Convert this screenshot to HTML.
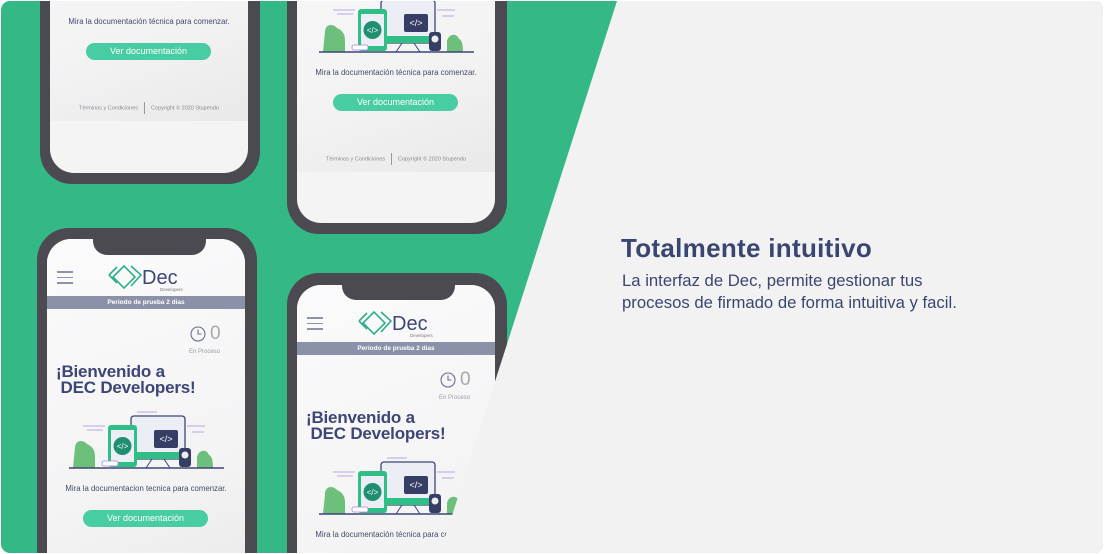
<!DOCTYPE html>
<html><head><meta charset="utf-8"><style>
*{margin:0;padding:0;box-sizing:border-box}
html,body{width:1104px;height:554px;overflow:hidden;background:#fff;font-family:"Liberation Sans",sans-serif}
#card{position:absolute;left:1px;top:1px;width:1102px;height:552px;border-radius:9px;overflow:hidden;background:#33b886}
.phone{position:absolute;width:220px;background:#4a4a50;border-radius:32px}
.screen{position:absolute;left:10px;width:198px;height:400px;overflow:hidden;border-radius:24px;background:#f4f4f4}
.inner{position:absolute;left:0;top:0;width:198px;height:349px;background:linear-gradient(160deg,#fbfbfc 0%,#f3f3f4 70%,#e9e9ea 100%)}
.notch{position:absolute;width:113px;height:27px;background:#4a4a50;border-radius:0 0 14px 14px;top:0}
.ham{position:absolute;left:10px;top:32px;width:16px}
.ham i{display:block;height:1.5px;background:#8d93a8;margin-bottom:4px}
.bar{position:absolute;left:0;top:57px;width:198px;height:13px;background:#8b91a8;color:#fff;font-size:6.5px;font-weight:bold;text-align:center;line-height:13px}
.zero{position:absolute;left:163px;top:84px;font-size:19px;color:#a8a8ad;font-weight:300}
.enp{position:absolute;left:142px;top:110px;font-size:6px;color:#9a9aa6}
.h{position:absolute;left:9px;top:125px;font-size:17px;line-height:16px;font-weight:bold;color:#3d4674;letter-spacing:-0.2px}
.mira{position:absolute;left:0;width:198px;top:245px;text-align:center;font-size:7.8px;color:#444a6e}
.btn{position:absolute;left:36px;top:271px;width:125px;height:17px;border-radius:9px;background:#48cca3;color:#fff;font-size:9px;text-align:center;line-height:17px}
.foot{position:absolute;left:0;width:198px;top:330px;text-align:center;font-size:5.5px;color:#8a8a90}
.foot b{display:inline-block;width:1px;height:12px;background:#999;vertical-align:middle;margin:0 6px;font-weight:normal}
#gray{position:absolute;left:0;top:0;width:1102px;height:552px;background:#f2f2f2;clip-path:polygon(616px 0,1102px 0,1102px 552px,439px 552px)}
h1{position:absolute;left:620px;top:232px;font-size:26px;color:#3b4670;font-weight:bold;letter-spacing:0.3px}
p{position:absolute;left:621px;top:269px;font-size:16.7px;line-height:22px;color:#3b4670}
</style></head><body><div id="card">

<div class="phone" style="left:39px;top:-260px;height:443px"><div class="screen" style="top:31px;height:401px">
<div class="inner"></div>
<div class="mira">Mira la documentación técnica para comenzar.</div>
<div class="btn">Ver documentación</div>
<div class="foot">Términos y Condiciones<b></b>Copyright © 2020 Stupendo</div>
</div></div>

<div class="phone" style="left:286px;top:-210px;height:443px"><div class="screen" style="top:32px">
<div class="inner"></div>
<svg style="position:absolute;left:0;top:160px" width="198" height="80" viewBox="0 0 198 80">
<path d="M28 49c0-8 8-9 12-4 5 2 8 6 8 12v12H26z" fill="#6cc07b"/><path d="M150 69v-11c2-8 10-8 12-2 3 1 4 6 4 13z" fill="#6cc07b"/>
<rect x="84" y="17" width="54" height="43" rx="3" fill="#eceef5" stroke="#3d4674" stroke-width="1.3"/>
<rect x="90" y="53" width="47" height="7" fill="#2fbf86"/>
<path d="M105 60l-6 9M117 60l6 9" stroke="#3d4674"/>
<rect x="61" y="26" width="29" height="42" rx="3" fill="#2fbf86"/><rect x="64" y="31" width="23" height="32" fill="#eceef5"/>
<circle cx="75.5" cy="47" r="9" fill="#1f8f6f"/><text x="75.5" y="50" font-size="8" fill="#fff" text-anchor="middle" font-family="Liberation Sans">&lt;/&gt;</text>
<rect x="107" y="31" width="24" height="18" rx="2" fill="#363e66"/><text x="119" y="43" font-size="9" fill="#fff" text-anchor="middle" font-family="Liberation Sans">&lt;/&gt;</text>
<rect x="132" y="49" width="12" height="19" rx="3" fill="#363e66"/><circle cx="138" cy="56" r="3.5" fill="#eee"/>
<rect x="55" y="62" width="16" height="5" rx="2" fill="#fff" stroke="#a889d6" stroke-width="0.8"/>
<path d="M36 27h22M40 31h16M140 27h18M145 33h12M90 13h20" stroke="#a889d6" stroke-width="0.8"/>
<path d="M22 69h155" stroke="#3d4674" stroke-width="1.5"/></svg>
<div class="mira">Mira la documentación técnica para comenzar.</div>
<div class="btn">Ver documentación</div>
<div class="foot">Términos y Condiciones<b></b>Copyright © 2020 Stupendo</div>
</div></div>

<div class="phone" style="left:36px;top:227px;height:440px"><div class="screen" style="top:11px">
<div class="inner"></div>
<div class="ham"><i></i><i></i><i></i></div>
<svg style="position:absolute;left:58px;top:22px" width="84" height="32" viewBox="0 0 84 32"><path d="M10 14l9-9 11 11-11 11-11-11z" fill="none" stroke="#2fae8a" stroke-width="1.6"/><path d="M4 14l8-8M4 14l8 8M26 5l10 9-10 11" fill="none" stroke="#2fae8a" stroke-width="1.6"/><text x="37" y="23" font-size="20" fill="#3d4674" font-family="Liberation Sans">Dec</text><text x="55" y="30" font-size="4.5" fill="#777" font-family="Liberation Sans">Developers</text></svg>
<div class="bar">Periodo de prueba 2 dias</div>
<svg style="position:absolute;left:143px;top:87px" width="16" height="16"><circle cx="8" cy="8" r="7" fill="none" stroke="#6b7091" stroke-width="1.1"/><path d="M8 3.5V8h3.5" fill="none" stroke="#6b7091" stroke-width="1.1"/></svg>
<div class="zero">0</div><div class="enp">En Proceso</div>
<div class="h">¡Bienvenido a<br>&nbsp;DEC Developers!</div>
<svg style="position:absolute;left:0;top:160px" width="198" height="80" viewBox="0 0 198 80">
<path d="M28 49c0-8 8-9 12-4 5 2 8 6 8 12v12H26z" fill="#6cc07b"/><path d="M150 69v-11c2-8 10-8 12-2 3 1 4 6 4 13z" fill="#6cc07b"/>
<rect x="84" y="17" width="54" height="43" rx="3" fill="#eceef5" stroke="#3d4674" stroke-width="1.3"/>
<rect x="90" y="53" width="47" height="7" fill="#2fbf86"/>
<path d="M105 60l-6 9M117 60l6 9" stroke="#3d4674"/>
<rect x="61" y="26" width="29" height="42" rx="3" fill="#2fbf86"/><rect x="64" y="31" width="23" height="32" fill="#eceef5"/>
<circle cx="75.5" cy="47" r="9" fill="#1f8f6f"/><text x="75.5" y="50" font-size="8" fill="#fff" text-anchor="middle" font-family="Liberation Sans">&lt;/&gt;</text>
<rect x="107" y="31" width="24" height="18" rx="2" fill="#363e66"/><text x="119" y="43" font-size="9" fill="#fff" text-anchor="middle" font-family="Liberation Sans">&lt;/&gt;</text>
<rect x="132" y="49" width="12" height="19" rx="3" fill="#363e66"/><circle cx="138" cy="56" r="3.5" fill="#eee"/>
<rect x="55" y="62" width="16" height="5" rx="2" fill="#fff" stroke="#a889d6" stroke-width="0.8"/>
<path d="M36 27h22M40 31h16M140 27h18M145 33h12M90 13h20" stroke="#a889d6" stroke-width="0.8"/>
<path d="M22 69h155" stroke="#3d4674" stroke-width="1.5"/></svg>
<div class="mira">Mira la documentacion tecnica para comenzar.</div>
<div class="btn">Ver documentación</div>
</div><div class="notch" style="left:56px"></div></div>

<div class="phone" style="left:286px;top:272px;height:440px"><div class="screen" style="top:12px">
<div class="inner"></div>
<div class="ham"><i></i><i></i><i></i></div>
<svg style="position:absolute;left:58px;top:22px" width="84" height="32" viewBox="0 0 84 32"><path d="M10 14l9-9 11 11-11 11-11-11z" fill="none" stroke="#2fae8a" stroke-width="1.6"/><path d="M4 14l8-8M4 14l8 8M26 5l10 9-10 11" fill="none" stroke="#2fae8a" stroke-width="1.6"/><text x="37" y="23" font-size="20" fill="#3d4674" font-family="Liberation Sans">Dec</text><text x="55" y="30" font-size="4.5" fill="#777" font-family="Liberation Sans">Developers</text></svg>
<div class="bar">Periodo de prueba 2 dias</div>
<svg style="position:absolute;left:143px;top:87px" width="16" height="16"><circle cx="8" cy="8" r="7" fill="none" stroke="#6b7091" stroke-width="1.1"/><path d="M8 3.5V8h3.5" fill="none" stroke="#6b7091" stroke-width="1.1"/></svg>
<div class="zero">0</div><div class="enp">En Proceso</div>
<div class="h">¡Bienvenido a<br>&nbsp;DEC Developers!</div>
<svg style="position:absolute;left:0;top:160px" width="198" height="80" viewBox="0 0 198 80">
<path d="M28 49c0-8 8-9 12-4 5 2 8 6 8 12v12H26z" fill="#6cc07b"/><path d="M150 69v-11c2-8 10-8 12-2 3 1 4 6 4 13z" fill="#6cc07b"/>
<rect x="84" y="17" width="54" height="43" rx="3" fill="#eceef5" stroke="#3d4674" stroke-width="1.3"/>
<rect x="90" y="53" width="47" height="7" fill="#2fbf86"/>
<path d="M105 60l-6 9M117 60l6 9" stroke="#3d4674"/>
<rect x="61" y="26" width="29" height="42" rx="3" fill="#2fbf86"/><rect x="64" y="31" width="23" height="32" fill="#eceef5"/>
<circle cx="75.5" cy="47" r="9" fill="#1f8f6f"/><text x="75.5" y="50" font-size="8" fill="#fff" text-anchor="middle" font-family="Liberation Sans">&lt;/&gt;</text>
<rect x="107" y="31" width="24" height="18" rx="2" fill="#363e66"/><text x="119" y="43" font-size="9" fill="#fff" text-anchor="middle" font-family="Liberation Sans">&lt;/&gt;</text>
<rect x="132" y="49" width="12" height="19" rx="3" fill="#363e66"/><circle cx="138" cy="56" r="3.5" fill="#eee"/>
<rect x="55" y="62" width="16" height="5" rx="2" fill="#fff" stroke="#a889d6" stroke-width="0.8"/>
<path d="M36 27h22M40 31h16M140 27h18M145 33h12M90 13h20" stroke="#a889d6" stroke-width="0.8"/>
<path d="M22 69h155" stroke="#3d4674" stroke-width="1.5"/></svg>
<div class="mira">Mira la documentación técnica para comenzar.</div>
</div><div class="notch" style="left:55px"></div></div>

<div id="gray"></div>
<h1>Totalmente intuitivo</h1>
<p>La interfaz de Dec, permite gestionar tus<br>procesos de firmado de forma intuitiva y facil.</p>
</div></body></html>
